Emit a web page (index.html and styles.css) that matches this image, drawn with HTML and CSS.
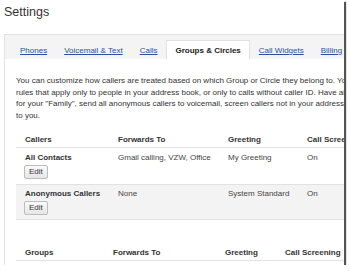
FILE: index.html
```html
<!DOCTYPE html>
<html lang="en">
<head>
    <meta charset="UTF-8">
    <meta name="viewport" content="width=device-width, initial-scale=1.0">
    <title>Settings</title>
    <link rel="stylesheet" href="styles.css">
</head>
<body>
    <div class="window">
        <h1 class="title">Settings</h1>

        <div class="tabs">
            <a class="tab" href="#">Phones</a>
            <a class="tab" href="#">Voicemail &amp; Text</a>
            <a class="tab" href="#">Calls</a>
            <span class="tab active">Groups &amp; Circles</span>
            <a class="tab" href="#">Call Widgets</a>
            <a class="tab" href="#">Billing</a>
        </div>

        <div class="content">
            <p class="intro">You can customize how callers are treated based on which Group or Circle they belong to. You can create<br>rules that apply only to people in your address book, or only to calls without caller ID. Have all calls ring<br>for your "Family", send all anonymous callers to voicemail, screen callers not in your address book, and<br>to you.</p>

            <table class="rules callers">
                <thead>
                    <tr>
                        <th class="c1">Callers</th>
                        <th class="c2">Forwards To</th>
                        <th class="c3">Greeting</th>
                        <th class="c4">Call Screening</th>
                    </tr>
                </thead>
                <tbody>
                    <tr>
                        <td>
                            <div class="name">All Contacts</div>
                            <button class="edit">Edit</button>
                        </td>
                        <td>Gmail calling, VZW, Office</td>
                        <td>My Greeting</td>
                        <td>On</td>
                    </tr>
                    <tr class="alt">
                        <td>
                            <div class="name">Anonymous Callers</div>
                            <button class="edit">Edit</button>
                        </td>
                        <td>None</td>
                        <td>System Standard</td>
                        <td>On</td>
                    </tr>
                </tbody>
            </table>

            <table class="rules groups">
                <thead>
                    <tr>
                        <th class="g1">Groups</th>
                        <th class="g2">Forwards To</th>
                        <th class="g3">Greeting</th>
                        <th class="g4">Call Screening</th>
                    </tr>
                </thead>
            </table>
        </div>
    </div>
</body>
</html>
```

FILE: styles.css
```css
body {
    margin: 0;
    padding: 0;
    background-color: #FFFFFF;
    font-family: "Liberation Sans", Arial, sans-serif;
    color: #333333;
}

.window {
    width: 344px;
    height: 265px;
    overflow: hidden;
    background-color: #FFFFFF;
    box-shadow: 2px 2px 1px #555555;
}

.title {
    margin: 0;
    padding: 5px 0 0 4px;
    height: 34px;
    box-sizing: border-box;
    font-size: 12.5px;
    line-height: 14px;
    font-weight: normal;
    color: #333333;
}

/* tab strip */
.tabs {
    display: flex;
    align-items: flex-end;
    margin-left: 4px;
    height: 24px;
    padding-left: 7px;
    background-color: #F4F4F4;
    border-top: 1px solid #E2E2E2;
    border-left: 1px solid #E2E2E2;
    white-space: nowrap;
}

.tab {
    display: block;
    padding: 0 8px 3px 8px;
    margin-right: 1px;
    font-size: 8px;
    line-height: 10px;
    color: #2A4FA8;
}

.tab:last-child {
    padding-right: 0;
    margin-right: 0;
}

.tab.active {
    padding: 5px 8px 3px 8px;
    background-color: #FFFFFF;
    color: #222222;
    font-weight: bold;
    border-top: 1px solid #E2E2E2;
    border-left: 1px solid #E2E2E2;
    border-right: 1px solid #E2E2E2;
}

.content {
    margin-left: 4px;
    padding: 16px 0 0 11px;
    border-left: 1px solid #E2E2E2;
    height: 200px;
}

.intro {
    margin: 0 0 11px 0;
    font-size: 8px;
    line-height: 11.5px;
    white-space: nowrap;
}

/* callers / groups tables */
.rules {
    border-collapse: collapse;
    table-layout: fixed;
    font-size: 8px;
}

.callers {
    width: 382px;
}

.groups {
    width: 360px;
    margin-top: 25px;
}

.rules th,
.rules td {
    box-sizing: border-box;
    padding-left: 9px;
    padding-right: 9px;
    text-align: left;
    white-space: nowrap;
    border-bottom: 1px solid #E2E2E2;
}

.rules th {
    padding-top: 2px;
    padding-bottom: 2px;
    line-height: 11px;
    color: #333333;
}

.rules td {
    padding-top: 4px;
    padding-bottom: 5px;
    line-height: 11px;
    vertical-align: top;
    color: #444444;
}

.rules .alt td {
    background-color: #F3F3F3;
    padding-top: 3px;
    padding-bottom: 4px;
}

.c1 { width: 93px; }
.c2 { width: 110px; }
.c3 { width: 79px; }
.c4 { width: 100px; }

.g1 { width: 88px; }
.g2 { width: 112px; }
.g3 { width: 60px; }
.g4 { width: 100px; }

.name {
    font-weight: bold;
    color: #333333;
    margin-bottom: 2px;
}

.edit {
    display: block;
    font-family: "Liberation Sans", Arial, sans-serif;
    font-size: 8px;
    line-height: 10px;
    padding: 1px 4px;
    height: 14px;
    margin: 0 0 0 -1px;
    border: 1px solid #BDBDBD;
    border-radius: 2px;
    background: linear-gradient(#FAFAFA, #E6E6E6);
    color: #333333;
}
```
